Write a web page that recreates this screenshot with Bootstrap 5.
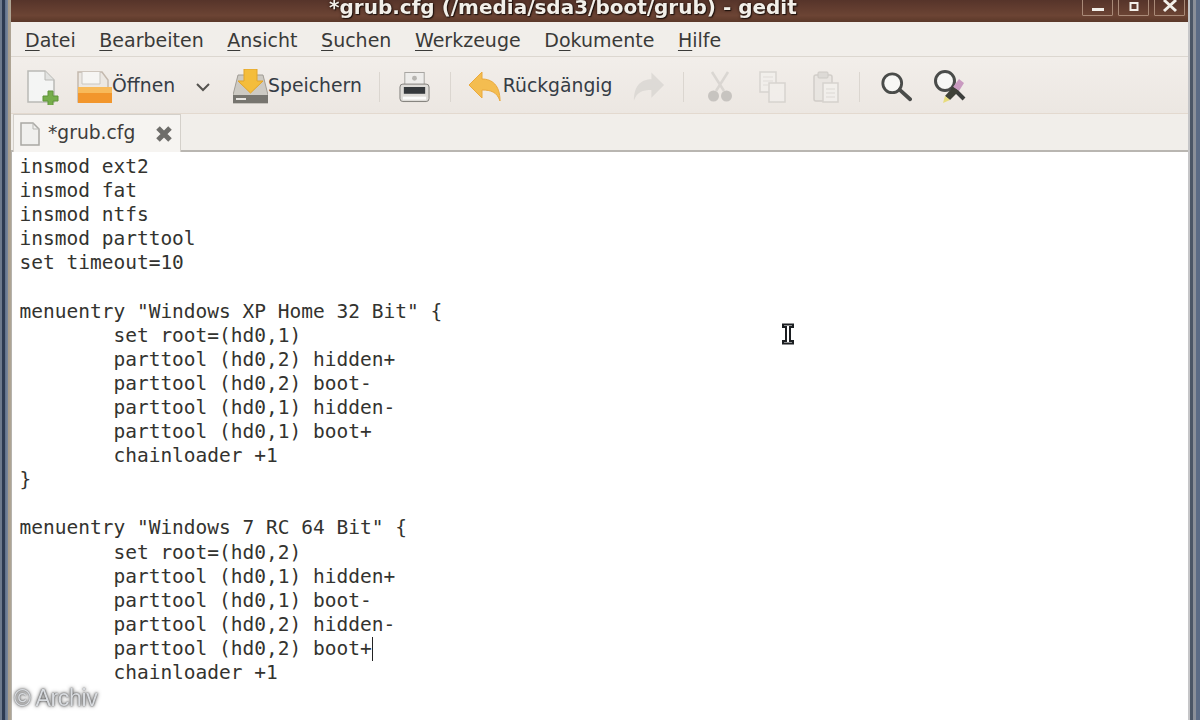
<!DOCTYPE html>
<html lang="de">
<head>
<meta charset="utf-8">
<title>*grub.cfg - gedit</title>
<link href="https://cdn.jsdelivr.net/npm/bootstrap@5.3.0/dist/css/bootstrap.min.css" rel="stylesheet">
<style>
html,body{margin:0;height:720px;overflow:hidden;background:#f1eeea}
.screen{width:1200px;height:720px;position:relative;overflow:hidden;font-family:"DejaVu Sans",sans-serif;color:#3c3b39;background:linear-gradient(90deg,#6d7a8c 0,#6d7a8c 2px,#2c3a50 2px,#2c3a50 5px,#5d6f8a 5px,#7d8a9c 8px,#a59a88 8px,#b0a696 11px,#f1eeea 11px,#f1eeea 1188px,#c6c6c8 1188px,#c6c6c8 1190px,#4b5666 1190px,#4b5666 1193px,#8a8f98 1193px,#8a8f98 1196px,#5b6b85 1196px,#5b6b85 1200px)}
.gframe{margin:0 12px 0 11px;height:720px}
.gtitle{height:22px;background:linear-gradient(#56342a,#6c4434 70%,#5b3829);position:relative;flex:none}
.gtitle-text{font-weight:700;font-size:20px;line-height:14px;color:#f2efe9;text-shadow:0 0 3px #1f120d,1px 1px 1px #1f120d;white-space:nowrap;margin-top:-8px;padding-left:318px}
.wbtns{position:absolute;right:3px;top:-6px;gap:5px}
.wbtn{width:31px;height:22px;border:1px solid #a98a78;display:flex;align-items:center;justify-content:center;border-radius:1px}
.wbtn svg{display:block}
.gmenu{height:35px;flex:none;border-bottom:1px solid #dcd7d0;background:#f1eeea;font-size:19px;padding-left:14px;gap:23.6px;line-height:35px;padding-top:1px;color:#3a3a38}
.gmenu u{text-underline-offset:3px;text-decoration-thickness:1px}
.gtool{height:57px;flex:none;background:linear-gradient(#f2eeea,#ece7e2);border-bottom:1px solid #e3d9cf;position:relative;font-size:18.8px;padding-left:15px;padding-top:3px}
.gtool svg{display:block;flex:none}
.tlabel{color:#353c45;line-height:1;white-space:nowrap}
.tsep{width:1px;height:30px;background:#dbd6d0;flex:none}
.gl1{margin-left:1px}.gl16{margin-left:16px}.gl17{margin-left:17px}.gl18{margin-left:18px}.gl19{margin-left:19px}.gl20{margin-left:20px}.gl21{margin-left:21px}.gl23{margin-left:23px}.gl25{margin-left:25px}.gl26{margin-left:26px}
.gtabs{height:38px;flex:none;background:#f1eeea;border-bottom:2px solid #b9b6b1}
.gtab{width:168px;height:38px;margin-left:2px;background:#f6f4f1;border:1px solid #d4d0ca;border-bottom:0;font-size:18.7px;padding-left:6px;gap:8px;color:#3e3d3b}
.tabclose{margin-left:12px}
.geditor{flex:1;background:#fff;margin:0;padding:3px 0 0 7.5px;border-left:1px solid #b5b2ac;font-family:"DejaVu Sans Mono",monospace;font-size:19.5px;line-height:24.1px;color:#33332f;tab-size:8;overflow:hidden;white-space:pre}
.tcaret{display:inline-block;width:0;height:24px;border-left:1.5px solid #222;vertical-align:-6px}
.ibeam{position:absolute;left:781px;top:322px}
.archiv{position:absolute;left:14px;top:685px;font-family:"Liberation Sans",sans-serif;font-size:23px;line-height:26px;color:#d8dbdf;text-shadow:0 0 2px #333,0 0 4px #555;letter-spacing:-.3px}
.softened{filter:blur(.6px)}
</style>
</head>
<body>
<div class="screen">
<div class="gframe d-flex flex-column softened">
  <div class="gtitle d-flex align-items-center">
    <div class="gtitle-text">*grub.cfg (/media/sda3/boot/grub) - gedit</div>
    <div class="wbtns d-flex">
      <div class="wbtn"><svg width="14" height="16" viewBox="0 0 14 16"><rect x="1" y="11" width="12" height="3" fill="#f2efe9"/></svg></div>
      <div class="wbtn"><svg width="12" height="14" viewBox="0 0 12 14"><rect x="2.5" y="5" width="7" height="7" fill="none" stroke="#f2efe9" stroke-width="2"/></svg></div>
      <div class="wbtn"><svg width="16" height="16" viewBox="0 0 16 16"><path d="M2 3l12 11M14 3L2 14" stroke="#f2efe9" stroke-width="3"/></svg></div>
    </div>
  </div>
  <div class="gmenu d-flex">
    <span><u>D</u>atei</span><span><u>B</u>earbeiten</span><span><u>A</u>nsicht</span><span><u>S</u>uchen</span><span><u>W</u>erkzeuge</span><span>D<u>o</u>kumente</span><span><u>H</u>ilfe</span>
  </div>
  <div class="gtool d-flex align-items-center">
    <svg width="34" height="36" viewBox="0 0 34 36"><path d="M2 2h17l9 9v22H2z" fill="#f4f5f4" stroke="#b9b9b5" stroke-width="1.5"/><path d="M19 2v9h9" fill="#e2e3e1" stroke="#b9b9b5"/><path d="M22 22h5v5h5v5h-5v5h-5v-5h-5v-5h5z" fill="#76ad4b" stroke="#5e9438"/></svg>
    <svg class="gl16" width="36" height="36" viewBox="0 0 36 36"><path d="M2 3h24l6 8v22H2z" fill="#ece8e3" stroke="#c4b9ae" stroke-width="1.5"/><path d="M6 3v12h18V3" fill="#f6f5f3" stroke="#c9c6c1"/><path d="M2 18h34v16H2z" fill="#f2962c"/><path d="M2 18h34v6H2z" fill="#f8ba5a"/></svg>
    <span class="tlabel">Öffnen</span>
    <svg class="gl21" width="14" height="10" viewBox="0 0 14 10"><path d="M1 2l6 6 6-6" fill="none" stroke="#55534f" stroke-width="2"/></svg>
    <svg class="gl23" width="35" height="36" viewBox="0 0 35 36"><path d="M5 6h25l5 20v8H0v-8z" fill="#cdcac3" stroke="#a09c95"/><path d="M0 26h35v8H0z" fill="#77756f"/><rect x="3" y="29" width="10" height="2" fill="#e8e6e2"/><path d="M11 0h13v12h6L17.500 24 5 12h6z" fill="#f4bd3c" stroke="#e1a42a"/></svg>
    <span class="tlabel">Speichern</span>
    <div class="tsep gl17"></div>
    <svg class="gl19" width="31" height="34" viewBox="0 0 32 34"><rect x="6" y="2" width="20" height="14" fill="#eeedeb" stroke="#a5a39f"/><circle cx="16" cy="8" r="2.500" fill="#b7b5b1"/><rect x="1" y="14" width="30" height="18" rx="3" fill="#dedcd8" stroke="#807e7a"/><rect x="5" y="17" width="22" height="7" fill="#35393c"/><rect x="4" y="27" width="24" height="3" fill="#fbfbfa"/></svg>
    <div class="tsep gl20"></div>
    <svg class="gl17" width="34" height="32" viewBox="0 0 34 32"><path d="M1 14L14 1v7c10 0 18 6 18 22-3-9-9-11-18-11v8z" fill="#f4bd50" stroke="#eaa93c"/></svg>
    <span class="tlabel gl1">Rückgängig</span>
    <svg class="gl19" width="33" height="32" viewBox="0 0 34 32" opacity=".45"><path d="M33 14L20 1v7C10 8 2 14 2 30c3-9 9-11 18-11v8z" fill="#c9c7c3"/></svg>
    <div class="tsep gl18"></div>
    <svg class="gl23" width="26" height="32" viewBox="0 0 26 32" opacity=".55"><path d="M5 1l12 19M21 1L9 20" stroke="#c9c6c2" stroke-width="2.500"/><circle cx="6.500" cy="25" r="5.500" fill="#a9a6a3"/><circle cx="19.500" cy="25" r="5.500" fill="#a9a6a3"/></svg>
    <svg class="gl26" width="28" height="32" viewBox="0 0 28 32" opacity=".6"><rect x="1" y="1" width="16" height="20" fill="#f3f1ee" stroke="#c9c6c2" stroke-width="1.500"/><rect x="10" y="12" width="16" height="19" fill="#f3f1ee" stroke="#c9c6c2" stroke-width="1.500"/><path d="M4 6h10M4 10h10M4 14h5" stroke="#d6d3cf"/></svg>
    <svg class="gl25" width="28" height="32" viewBox="0 0 26 32" opacity=".65"><rect x="1" y="4" width="18" height="26" rx="2" fill="#e6e3df" stroke="#c2bfba" stroke-width="1.500"/><rect x="5" y="1" width="10" height="6" rx="1" fill="#d4d1cd" stroke="#bcb9b4"/><rect x="10" y="12" width="15" height="19" fill="#f4f2ef" stroke="#c9c6c2" stroke-width="1.500"/><path d="M13 18h9M13 22h9M13 26h9" stroke="#d3d0cc"/></svg>
    <div class="tsep gl19"></div>
    <svg class="gl20" width="32" height="32" viewBox="0 0 34 34"><circle cx="13" cy="13" r="10" fill="#f7f7f5" stroke="#4a4c4a" stroke-width="3"/><path d="M21 20l11 10" stroke="#4a4c4a" stroke-width="4" stroke-linecap="round"/></svg>
    <svg class="gl21" width="34" height="36" viewBox="0 0 34 36"><circle cx="12" cy="12" r="9.500" fill="#f7f7f5" stroke="#4a4c4a" stroke-width="3"/><path d="M19 18l12 12" stroke="#3d3f3d" stroke-width="4"/><path d="M26 10l5 4-5 8-6-4z" fill="#c99ac0"/><path d="M20 18l6 4-9 9-5-4z" fill="#3f4138"/><path d="M12 27l5 4-7 3z" fill="#e7dc7c"/></svg>
  </div>
  <div class="gtabs d-flex">
    <div class="gtab d-flex align-items-center">
      <svg width="20" height="24" viewBox="0 0 20 24"><path d="M1 1h12l6 6v16H1z" fill="#f0f0ee" stroke="#a9a8a4" stroke-width="1.500"/><path d="M13 1v6h6" fill="none" stroke="#b9b8b4"/></svg>
      <span>*grub.cfg</span>
      <svg class="tabclose" width="18" height="18" viewBox="0 0 18 18"><path d="M3 3l12 12M15 3L3 15" stroke="#6e6d6a" stroke-width="5"/></svg>
    </div>
  </div>
<pre class="geditor">insmod ext2
insmod fat
insmod ntfs
insmod parttool
set timeout=10

menuentry "Windows XP Home 32 Bit" {
	set root=(hd0,1)
	parttool (hd0,2) hidden+
	parttool (hd0,2) boot-
	parttool (hd0,1) hidden-
	parttool (hd0,1) boot+
	chainloader +1
}

menuentry "Windows 7 RC 64 Bit" {
	set root=(hd0,2)
	parttool (hd0,1) hidden+
	parttool (hd0,1) boot-
	parttool (hd0,2) hidden-
	parttool (hd0,2) boot+<span class="tcaret"></span>
	chainloader +1</pre>
</div>
<svg class="ibeam" width="14" height="24" viewBox="0 0 14 24"><path d="M2 2.500h10v2.500H9v14h3v2.500H2V19h3V5H2z" fill="#fff" stroke="#1c1f22" stroke-width="2"/></svg>
<div class="archiv">© Archiv</div>
</div>
<script src="https://cdn.jsdelivr.net/npm/bootstrap@5.3.0/dist/js/bootstrap.bundle.min.js"></script>
</body>
</html>
